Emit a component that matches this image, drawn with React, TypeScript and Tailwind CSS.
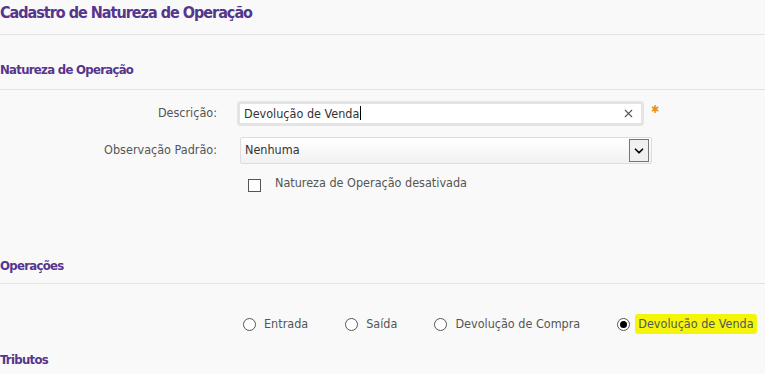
import { X, ChevronDown } from "lucide-react";

const font = { fontFamily: '"DejaVu Sans Condensed", "DejaVu Sans", sans-serif' };

const ops = [
  { label: "Entrada", checked: false },
  { label: "Saída", checked: false },
  { label: "Devolução de Compra", checked: false },
  { label: "Devolução de Venda", checked: true },
];

function Radio({ checked }: { checked: boolean }) {
  return (
    <span className="flex h-[13px] w-[13px] shrink-0 items-center justify-center rounded-full border border-[#555] bg-white">
      {checked && <span className="h-[7px] w-[7px] rounded-full bg-black" />}
    </span>
  );
}

function SectionTitle({ children, line = true }: { children: string; line?: boolean }) {
  return (
    <h2
      className={
        line
          ? "border-b border-[#e3e3e3] pb-[8px] text-[13px] leading-[18px] font-bold tracking-[-0.7px] text-[#56358d]"
          : "text-[13px] leading-[18px] font-bold tracking-[-0.7px] text-[#56358d]"
      }
    >
      {children}
    </h2>
  );
}

export default function App() {
  return (
    <div className="h-[374px] w-[765px] overflow-hidden bg-[#f9f9f9] text-[#555]" style={font}>
      <h1 className="h-[35px] border-b border-[#e3e3e3] pt-[2px] text-[16px] leading-[22px] font-bold tracking-[-1px] text-[#56358d]">
        Cadastro de Natureza de Operação
      </h1>

      <div className="pt-[26px]">
        <h2 className="border-b border-[#e3e3e3] pb-[10px] text-[13px] leading-[18px] font-bold tracking-[-0.7px] text-[#56358d]">
          Natureza de Operação
        </h2>
      </div>

      <div className="flex flex-col pt-[11px]">
        <div className="flex h-[25px] items-center">
          <label className="w-[217px] text-right text-[12.5px] text-[#555]">Descrição:</label>
          <div className="ml-[20px] flex h-[25px] w-[407px] items-center rounded-[4px] border-[3px] border-[#e4e4e4] bg-white pl-[4px] pr-[6px]">
            <span className="flex-1 text-[12.5px] text-[#333]">
              Devolução de Venda<span className="ml-px inline-block h-[14px] w-px translate-y-[2px] bg-black" />
            </span>
            <X className="h-[13px] w-[13px] text-[#555]" strokeWidth={2} />
          </div>
          <span className="ml-[7px] -mt-[6px] text-[11px] font-bold text-[#e8931e]">✱</span>
        </div>

        <div className="mt-[11px] flex h-[27px] items-center">
          <label className="w-[217px] text-right text-[12.5px] text-[#555]">Observação Padrão:</label>
          <div className="ml-[23px] flex h-[27px] w-[412px] items-center rounded-[2px] border border-[#ddd] bg-gradient-to-b from-white to-[#f1f1f1] pl-[4px] pr-[2px]">
            <span className="flex-1 text-[12.5px] text-[#333]">Nenhuma</span>
            <span className="flex h-[23px] w-[20px] items-center justify-center border border-[#777] bg-[#f0f0f0]">
              <ChevronDown className="h-[14px] w-[14px] text-black" strokeWidth={3} />
            </span>
          </div>
        </div>

        <div className="mt-[14px] flex h-[14px] items-center pl-[248px]">
          <span className="h-[13px] w-[13px] border border-[#555] bg-white" />
          <span className="ml-[14px] -mt-[4px] text-[12.5px]">Natureza de Operação desativada</span>
        </div>
      </div>

      <div className="pt-[65px]">
        <SectionTitle>Operações</SectionTitle>
      </div>

      <div className="mt-[32px] flex h-[16px] items-center gap-[37px] whitespace-nowrap pl-[243px] text-[12.5px]">
        {ops.map((o) => (
          <label key={o.label} className="flex shrink-0 items-center gap-[8px]">
            <Radio checked={o.checked} />
            <span className={o.checked ? "-ml-[3px] rounded-[3px] bg-[#f5f50a] px-[3px] py-px" : ""}>
              {o.label}
            </span>
          </label>
        ))}
      </div>

      <div className="pt-[19px]">
        <SectionTitle line={false}>Tributos</SectionTitle>
      </div>
    </div>
  );
}
